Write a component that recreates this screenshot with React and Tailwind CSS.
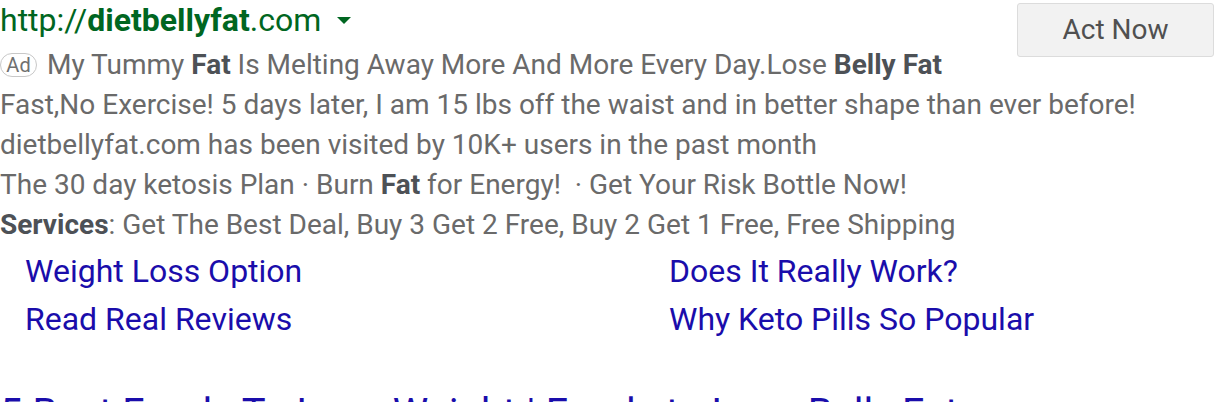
import React from 'react';

const sitelinks = [
  ['Weight Loss Option', 'Does It Really Work?'],
  ['Read Real Reviews', 'Why Keto Pills So Popular'],
];

export default function App() {
  return (
    <div className="w-[1216px] h-[402px] overflow-hidden bg-white font-['Roboto',sans-serif]">
      {/* call to action */}
      <button className="float-right mt-[3px] mr-[2px] w-[197px] h-[54px] rounded-[3px] border border-[#dcdcdc] bg-[#f2f2f2] text-[28px] text-[#505050]">
        Act Now
      </button>

      {/* display url */}
      <div className="h-[40px] mb-[5px] flex items-center text-[32px] text-[#006621] leading-none">
        <span>http://</span>
        <b className="font-bold">dietbellyfat</b>
        <span>.com</span>
        <span className="ml-[16px] w-0 h-0 border-l-[7px] border-r-[7px] border-t-[7px] border-l-transparent border-r-transparent border-t-[#006621]" />
      </div>

      <div className="text-[28px] leading-[40px] text-[#6a6a6a]">
        <div className="flex items-center">
          <span className="mr-[10px] w-[37px] h-[24px] flex items-center justify-center rounded-[12px] border border-[#c8c8c8] text-[20px] leading-none text-[#707070]">Ad</span>
          <span>
            My Tummy <b className="text-[#4d5156]">Fat</b> Is Melting Away More And More Every Day.Lose <b className="text-[#4d5156]">Belly Fat</b>
          </span>
        </div>
        <div>Fast,No Exercise! 5 days later, I am 15 lbs off the waist and in better shape than ever before!</div>
        <div>dietbellyfat.com has been visited by 10K+ users in the past month</div>
        <div>
          The 30 day ketosis Plan · Burn <b className="text-[#4d5156]">Fat</b> for Energy! &nbsp;· Get Your Risk Bottle Now!
        </div>
        <div>
          <b className="text-[#4d5156]">Services</b>: Get The Best Deal, Buy 3 Get 2 Free, Buy 2 Get 1 Free, Free Shipping
        </div>
      </div>

      {/* sitelinks */}
      <div className="pl-[25px] pt-[2px] text-[32px] leading-[48px] text-[#1a0dab]">
        {sitelinks.map((row, i) => (
          <div key={i} className="grid grid-cols-[644px_1fr]">
            <a>{row[0]}</a>
            <a>{row[1]}</a>
          </div>
        ))}
      </div>

      <div className="mt-[47px] text-[40px] leading-[48px] whitespace-nowrap text-[#1a0dab]">
        5 Best Foods To Lose Weight | Foods to Lose Belly Fat
      </div>
    </div>
  );
}
